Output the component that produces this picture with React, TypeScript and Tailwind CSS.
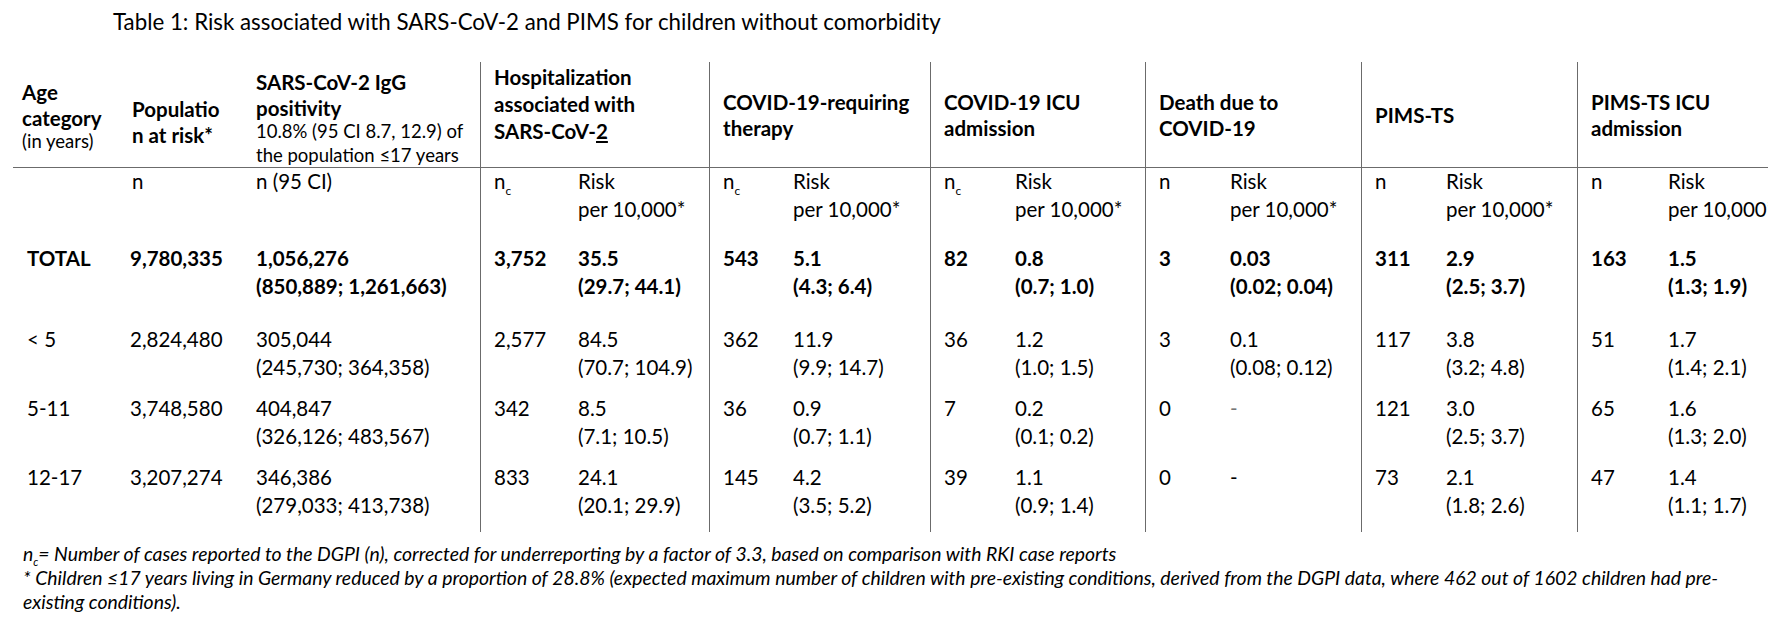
import React from "react";

const GRID =
  "grid grid-cols-[107px_123px_237px_85px_144px_71px_150px_72px_143px_72px_144px_72px_144px_78px_165px]";
const LINE = "border-[#6b6b6b]";

function Nc() {
  return (
    <span>
      n<sub className="text-[12px] align-[-3px]">c</sub>
    </span>
  );
}

type Group = { title: React.ReactNode; n: React.ReactNode; pad?: string };

const groups: Group[] = [
  {
    title: (
      <>
        Hospitalization
        <br />
        associated with
        <br />
        SARS-CoV-<span className="underline">2</span>
      </>
    ),
    n: <Nc />,
    pad: "pb-[20px] leading-[27px]",
  },
  {
    title: (
      <>
        COVID-19-requiring
        <br />
        therapy
      </>
    ),
    n: <Nc />,
  },
  {
    title: (
      <>
        COVID-19 ICU
        <br />
        admission
      </>
    ),
    n: <Nc />,
  },
  {
    title: (
      <>
        Death due to
        <br />
        COVID-19
      </>
    ),
    n: "n",
  },
  { title: "PIMS-TS", n: "n" },
  {
    title: (
      <>
        PIMS-TS ICU
        <br />
        admission
      </>
    ),
    n: "n",
  },
];

type Row = {
  age: string;
  pop: string;
  igg: [string, string];
  cells: [string, string, string][]; // n, risk, ci
  bold?: boolean;
  h: string;
};

const rows: Row[] = [
  {
    age: "TOTAL",
    pop: "9,780,335",
    igg: ["1,056,276", "(850,889; 1,261,663)"],
    cells: [
      ["3,752", "35.5", "(29.7; 44.1)"],
      ["543", "5.1", "(4.3; 6.4)"],
      ["82", "0.8", "(0.7; 1.0)"],
      ["3", "0.03", "(0.02; 0.04)"],
      ["311", "2.9", "(2.5; 3.7)"],
      ["163", "1.5", "(1.3; 1.9)"],
    ],
    bold: true,
    h: "h-[81px]",
  },
  {
    age: "< 5",
    pop: "2,824,480",
    igg: ["305,044", "(245,730; 364,358)"],
    cells: [
      ["2,577", "84.5", "(70.7; 104.9)"],
      ["362", "11.9", "(9.9; 14.7)"],
      ["36", "1.2", "(1.0; 1.5)"],
      ["3", "0.1", "(0.08; 0.12)"],
      ["117", "3.8", "(3.2; 4.8)"],
      ["51", "1.7", "(1.4; 2.1)"],
    ],
    h: "h-[69px]",
  },
  {
    age: "5-11",
    pop: "3,748,580",
    igg: ["404,847", "(326,126; 483,567)"],
    cells: [
      ["342", "8.5", "(7.1; 10.5)"],
      ["36", "0.9", "(0.7; 1.1)"],
      ["7", "0.2", "(0.1; 0.2)"],
      ["0", "-", ""],
      ["121", "3.0", "(2.5; 3.7)"],
      ["65", "1.6", "(1.3; 2.0)"],
    ],
    h: "h-[69px]",
  },
  {
    age: "12-17",
    pop: "3,207,274",
    igg: ["346,386", "(279,033; 413,738)"],
    cells: [
      ["833", "24.1", "(20.1; 29.9)"],
      ["145", "4.2", "(3.5; 5.2)"],
      ["39", "1.1", "(0.9; 1.4)"],
      ["0", "-", ""],
      ["73", "2.1", "(1.8; 2.6)"],
      ["47", "1.4", "(1.1; 1.7)"],
    ],
    h: "h-[68px]",
  },
];

export default function App() {
  return (
    <div className="w-[1768px] h-[618px] overflow-hidden bg-white text-black font-['Lato',sans-serif]">
      {/* Title */}
      <div className="pt-[8px] pl-[113px] text-[22.3px] leading-[28px]">
        Table 1: Risk associated with SARS-CoV-2 and PIMS for children without comorbidity
      </div>

      {/* Table */}
      <div className="mt-[26px] ml-[13px] text-[20.5px] leading-[27.5px] whitespace-nowrap">
        {/* Header */}
        <div className={`${GRID} h-[106px] font-bold leading-[26px]`}>
          <div className={`flex flex-col justify-center pl-[9px] border-b ${LINE}`}>
            <span>Age</span>
            <span>category</span>
            <span className="font-normal text-[18.5px] leading-[20px]">(in years)</span>
          </div>
          <div className={`flex flex-col justify-center pl-[12px] pt-[14px] border-b ${LINE}`}>
            <span>Populatio</span>
            <span>n at risk*</span>
          </div>
          <div className={`flex flex-col justify-start pl-[13px] pt-[7px] border-b ${LINE}`}>
            <span>SARS-CoV-2 IgG</span>
            <span>positivity</span>
            <span className="font-normal text-[18.5px] leading-[21px]">10.8% (95 CI 8.7, 12.9) of</span>
            <span className="font-normal text-[18.5px] leading-[21px] mt-[3px]">the population ≤17 years</span>
          </div>
          {groups.map((g, i) => (
            <div
              key={i}
              className={`col-span-2 flex flex-col justify-center pl-[13px] border-l border-b ${LINE} ${g.pad ?? ""}`}
            >
              <span>{g.title}</span>
            </div>
          ))}
        </div>

        {/* Sub header */}
        <div className={`${GRID} h-[77px]`}>
          <div />
          <div className="pl-[12px]">n</div>
          <div className="pl-[13px]">n (95 CI)</div>
          {groups.map((g, i) => (
            <React.Fragment key={i}>
              <div className={`pl-[13px] border-l ${LINE}`}>{g.n}</div>
              <div className="pl-[13px]">
                Risk
                <br />
                per 10,000*
              </div>
            </React.Fragment>
          ))}
        </div>

        {/* Body */}
        {rows.map((r) => (
          <div key={r.age} className={`${GRID} ${r.h} ${r.bold ? "font-bold" : ""}`}>
            <div className="pl-[14px]">{r.age}</div>
            <div className="pl-[10px]">{r.pop}</div>
            <div className="pl-[13px]">
              {r.igg[0]}
              <br />
              {r.igg[1]}
            </div>
            {r.cells.map((c, i) => (
              <React.Fragment key={i}>
                <div className={`pl-[13px] border-l ${LINE}`}>{c[0]}</div>
                <div className={`pl-[13px] ${c[1] === "-" && r.age === "5-11" ? "text-[#777]" : ""}`}>
                  {c[1]}
                  {c[2] && <br />}
                  {c[2]}
                </div>
              </React.Fragment>
            ))}
          </div>
        ))}
      </div>

      {/* Footnotes */}
      <div className="mt-[10px] pl-[23px] italic text-[19.4px] leading-[24px] whitespace-nowrap">
        <div>
          n<sub className="text-[11px] leading-none align-[-2px]">c</sub>= Number of cases reported to the DGPI (n),
          corrected for underreporting by a factor of 3.3, based on comparison with RKI case reports
        </div>
        <div>
          * Children ≤17 years living in Germany reduced by a proportion of 28.8% (expected maximum number of children
          with pre-existing conditions, derived from the DGPI data, where 462 out of 1602 children had pre-
        </div>
        <div>existing conditions).</div>
      </div>
    </div>
  );
}
